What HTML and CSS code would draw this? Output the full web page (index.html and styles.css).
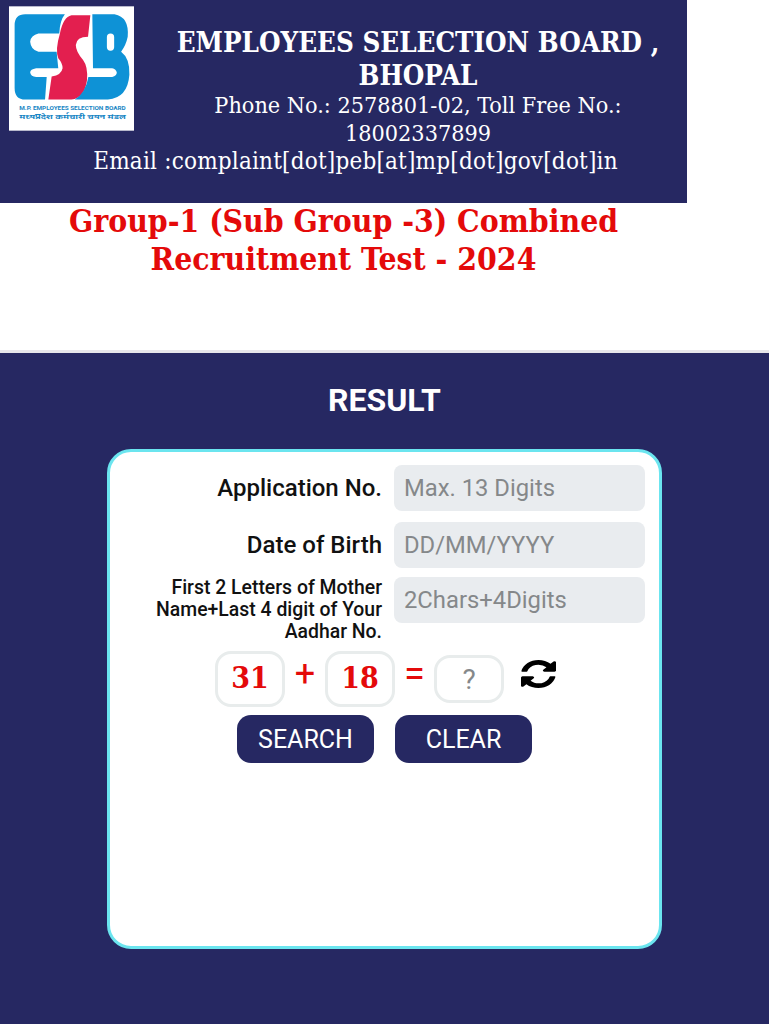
FILE: index.html
```html
<!DOCTYPE html>
<html lang="en">
<head>
<meta charset="utf-8">
<title>Employees Selection Board, Bhopal - Result</title>
<link rel="stylesheet" href="styles.css">
</head>
<body>
<header class="top">
  <div class="logo">
    <svg viewBox="26 18 378 376" width="125" height="125" role="img" aria-label="ESB logo">
      <rect x="26" y="18" width="378" height="376" fill="#fff"/>
      <path fill="#0e92d6" d="M75 42H195Q180 60 178 100H115Q92 105 90 125Q92 150 115 155H170L175 205H108Q90 208 90 218Q92 230 108 232H140L135 300H75Q43 300 43 265V75Q43 42 75 42Z"/>
      <path fill="#e31f4f" d="M215 45H272L265 110Q230 110 228 135Q228 155 250 180Q265 200 262 240Q255 295 215 300H145L155 230Q185 225 188 205Q188 190 175 175Q165 150 180 100Q190 50 215 45Z"/>
      <path fill="#0e92d6" d="M278 42H345Q390 50 385 110Q380 135 365 155Q392 175 390 225Q385 295 325 300H225Q258 280 266 232H338Q352 228 352 218Q350 207 338 205H280Z"/>
      <rect x="322" y="100" width="22" height="52" rx="11" fill="#fff"/>
      <text class="logo-en" x="218" y="332" text-anchor="middle" textLength="322" lengthAdjust="spacingAndGlyphs">M.P. EMPLOYEES SELECTION BOARD</text>
      <text class="logo-hi" x="218" y="358" text-anchor="middle" textLength="322" lengthAdjust="spacingAndGlyphs">मध्यप्रदेश कर्मचारी चयन मंडल</text>
    </svg>
  </div>
  <h2 class="board">EMPLOYEES SELECTION BOARD , BHOPAL</h2>
  <p class="contact">Phone No.: 2578801-02, Toll Free No.: 18002337899</p>
  <p class="contact contact-email">Email :complaint[dot]peb[at]mp[dot]gov[dot]in</p>
</header>
<h1 class="exam">Group-1 (Sub Group -3) Combined Recruitment Test - 2024</h1>
<main class="panel">
  <h2 class="panel-title">RESULT</h2>
  <form class="card">
    <div class="row">
      <label class="label">Application No.</label>
      <input class="field" type="text" placeholder="Max. 13 Digits">
    </div>
    <div class="row">
      <label class="label">Date of Birth</label>
      <input class="field" type="text" placeholder="DD/MM/YYYY">
    </div>
    <div class="row row-long">
      <label class="label label-small">First 2 Letters of Mother Name+Last 4 digit of Your Aadhar No.</label>
      <input class="field" type="text" placeholder="2Chars+4Digits">
    </div>
    <div class="captcha">
      <span class="num">31</span>
      <span class="op op-plus">+</span>
      <span class="num">18</span>
      <span class="op op-eq">=</span>
      <input class="answer" type="text" placeholder="?">
      <svg class="refresh" viewBox="128 128 1536 1536" preserveAspectRatio="none" aria-label="Refresh">
        <path d="M1639 1056q0 5-1 7-64 268-268 434.5t-478 166.5q-146 0-282.5-55t-243.5-157l-129 129q-19 19-45 19t-45-19-19-45v-448q0-26 19-45t45-19h448q26 0 45 19t19 45-19 45l-137 137q71 66 161 102t187 36q134 0 250-65t186-179q11-17 53-117 8-23 30-23h192q13 0 22.5 9.5t9.5 22.5zm25-800v448q0 26-19 45t-45 19h-448q-26 0-45-19t-19-45 19-45l138-138q-148-137-349-137-134 0-250 65t-186 179q-11 17-53 117-8 23-30 23h-199q-13 0-22.5-9.5t-9.5-22.5v-7q65-268 270-434.5t480-166.5q146 0 284 55.5t245 156.5l130-129q19-19 45-19t45 19 19 45z"/>
      </svg>
    </div>
    <div class="actions">
      <button class="btn" type="button">SEARCH</button>
      <button class="btn" type="button">CLEAR</button>
    </div>
  </form>
</main>
</body>
</html>
```
FILE: styles.css
```css
* { box-sizing: border-box; }
html, body { margin: 0; padding: 0; }
body {
  width: 769px;
  height: 1024px;
  overflow: hidden;
  background: #fff;
  font-family: Roboto, "Liberation Sans", sans-serif;
}
.top {
  width: 687px;
  height: 203px;
  padding: 26px 0 0 24px;
  background: #262862;
  color: #fff;
  text-align: center;
  font-family: "DejaVu Serif Condensed", "DejaVu Serif", serif;
}
.logo {
  float: left;
  width: 125px;
  height: 125px;
  margin: -20px 15px 0 -15px;
}
.logo svg { display: block; }
.logo-en { font: 700 17px Roboto, sans-serif; fill: #1685c4; }
.logo-hi { font: 700 20px "Noto Sans", sans-serif; fill: #1685c4; }
.board {
  margin: 0 0 -1px;
  font-size: 27.5px;
  line-height: 33px;
  font-weight: 700;
}
.contact {
  margin: 0;
  font-size: 23.2px;
  line-height: 28px;
}
.contact-email {
  font-size: 24px;
  letter-spacing: 0.2px;
}
.exam {
  width: 687px;
  height: 148px;
  margin: -1px 0 0;
  padding: 0 60px;
  color: #e40a0a;
  text-align: center;
  font-family: "DejaVu Serif Condensed", "DejaVu Serif", serif;
  font-size: 31.6px;
  line-height: 38px;
  font-weight: 700;
}
.panel {
  height: 674px;
  padding-top: 29px;
  border-top: 3px solid #e6e6ea;
  background: #262862;
}
.panel-title {
  margin: 0 0 31px;
  color: #fff;
  text-align: center;
  font-size: 32px;
  line-height: 36px;
  font-weight: 700;
}
.card {
  width: 555px;
  height: 500px;
  margin-left: 107px;
  padding: 13px 14px 0 0;
  border: 3px solid #6be5ef;
  border-radius: 24px;
  background: #fff;
}
.row {
  display: flex;
  align-items: center;
  justify-content: flex-end;
  gap: 12px;
  height: 46px;
  margin-bottom: 11px;
}
.row:nth-child(2) { margin-bottom: 9px; }
.row-long { align-items: flex-start; height: 76px; margin-bottom: 0; }
.label {
  color: #111;
  text-align: right;
  font-size: 24px;
  font-weight: 500;
}
.label-small {
  width: 232px;
  font-size: 19.4px;
  line-height: 22px;
}
.field {
  width: 251px;
  height: 46px;
  padding: 0 9px 0 10px;
  border: 0;
  border-radius: 8px;
  background: #e9ecef;
  font-family: Roboto, sans-serif;
  font-size: 23.8px;
}
.field::placeholder { color: #85888a; opacity: 1; }
.captcha {
  display: flex;
  align-items: center;
  margin: -4px 0 0 105px;
  height: 60px;
}
.num {
  display: flex;
  align-items: center;
  justify-content: center;
  width: 70px;
  height: 56px;
  padding-bottom: 3px;
  border: 3px solid #e8ecec;
  border-radius: 16px;
  color: #e40a0a;
  font-family: "DejaVu Serif Condensed", "DejaVu Serif", serif;
  font-size: 30px;
  font-weight: 700;
}
.op {
  width: 40px;
  color: #e40a0a;
  text-align: center;
  font-family: Roboto, sans-serif;
  font-size: 36px;
  font-weight: 400;
  line-height: 36px;
  margin-top: -10px;
}
.op-eq { width: 39px; font-size: 38px; }
.answer {
  width: 70px;
  height: 48px;
  border: 3px solid #e8ecec;
  border-radius: 16px;
  background: #fff;
  text-align: center;
  font-family: Roboto, sans-serif;
  font-size: 28px;
}
.answer::placeholder { color: #85888a; opacity: 1; }
.refresh {
  width: 35px;
  height: 28px;
  margin: -10px 0 0 17px;
  fill: #000;
}
.actions {
  display: flex;
  gap: 21px;
  margin: 6px 0 0 127px;
}
.btn {
  width: 137px;
  height: 48px;
  border: 0;
  border-radius: 14px;
  background: #262862;
  color: #fff;
  font-family: Roboto, sans-serif;
  font-size: 25px;
}
```
